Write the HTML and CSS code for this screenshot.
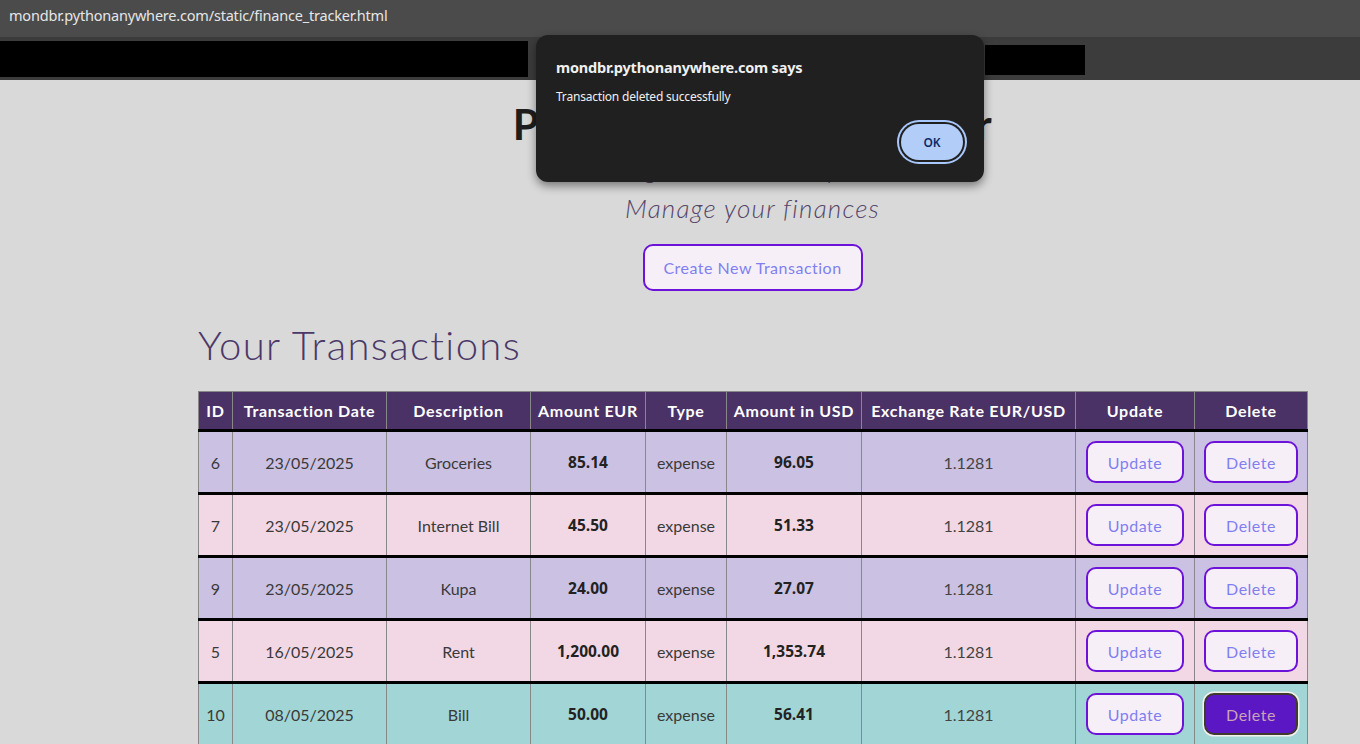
FILE: index.html
```html
<!DOCTYPE html>
<html lang="en">
<head>
<meta charset="utf-8">
<title>Finance Tracker</title>
<link rel="stylesheet" href="styles.css">
</head>
<body>
<div class="chrome">
  <div class="urlbar"><span class="url">mondbr.pythonanywhere.com/static/finance_tracker.html</span></div>
  <div class="tabstrip">
    <div class="redact redact-left"></div>
    <div class="redact redact-right"></div>
  </div>
</div>

<main class="page">
  <div class="container">
    <header class="hero">
      <h1 class="title">Personal Finance Tracker</h1>
      <p class="tagline">Bring order to all expenses</p>
      <p class="tagline">Manage your finances</p>
      <button class="btn btn-create">Create New Transaction</button>
    </header>

    <h2 class="section-title">Your Transactions</h2>

    <table class="tx-table">
      <colgroup>
        <col class="c-id"><col class="c-date"><col class="c-desc"><col class="c-eur"><col class="c-type"><col class="c-usd"><col class="c-rate"><col class="c-upd"><col class="c-del">
      </colgroup>
      <thead>
        <tr>
          <th>ID</th><th>Transaction Date</th><th>Description</th><th>Amount EUR</th><th>Type</th><th>Amount in USD</th><th>Exchange Rate EUR/USD</th><th>Update</th><th>Delete</th>
        </tr>
      </thead>
      <tbody>
        <tr class="row-lavender">
          <td>6</td><td>23/05/2025</td><td>Groceries</td><td class="num">85.14</td><td>expense</td><td class="num">96.05</td><td class="rate">1.1281</td>
          <td><button class="btn btn-row">Update</button></td><td><button class="btn btn-row">Delete</button></td>
        </tr>
        <tr class="row-pink">
          <td>7</td><td>23/05/2025</td><td>Internet Bill</td><td class="num">45.50</td><td>expense</td><td class="num">51.33</td><td class="rate">1.1281</td>
          <td><button class="btn btn-row">Update</button></td><td><button class="btn btn-row">Delete</button></td>
        </tr>
        <tr class="row-lavender">
          <td>9</td><td>23/05/2025</td><td>Kupa</td><td class="num">24.00</td><td>expense</td><td class="num">27.07</td><td class="rate">1.1281</td>
          <td><button class="btn btn-row">Update</button></td><td><button class="btn btn-row">Delete</button></td>
        </tr>
        <tr class="row-pink">
          <td>5</td><td>16/05/2025</td><td>Rent</td><td class="num">1,200.00</td><td>expense</td><td class="num">1,353.74</td><td class="rate">1.1281</td>
          <td><button class="btn btn-row">Update</button></td><td><button class="btn btn-row">Delete</button></td>
        </tr>
        <tr class="row-teal">
          <td>10</td><td>08/05/2025</td><td>Bill</td><td class="num">50.00</td><td>expense</td><td class="num">56.41</td><td class="rate">1.1281</td>
          <td><button class="btn btn-row">Update</button></td><td><button class="btn btn-row btn-active">Delete</button></td>
        </tr>
      </tbody>
    </table>
  </div>
</main>

<div class="dialog" role="alertdialog">
  <div class="dialog-title">mondbr.pythonanywhere.com says</div>
  <div class="dialog-msg">Transaction deleted successfully</div>
  <div class="dialog-actions"><button class="dialog-ok">OK</button></div>
</div>
</body>
</html>
```

FILE: styles.css
```css
html, body {
  margin: 0;
  padding: 0;
  overflow: hidden;
  height: 744px;
}
body {
  background: #d9d9d9;
  font-family: "Lato", "Open Sans", sans-serif;
  color: #3a3a3a;
}

/* browser chrome */
.chrome {
  display: flex;
  flex-direction: column;
}
.urlbar {
  height: 37px;
  background: #4b4b4b;
  display: flex;
  align-items: center;
  padding-left: 9px;
  padding-bottom: 8px;
  box-sizing: border-box;
}
.url {
  font-family: "Noto Sans", "Open Sans", sans-serif;
  font-size: 14.5px;
  color: #e6e6e6;
  letter-spacing: -0.2px;
}
.tabstrip {
  height: 43px;
  background: #3c3c3c;
  display: flex;
  align-items: flex-start;
}
.redact {
  background: #000;
}
.redact-left {
  width: 528px;
  height: 36px;
  margin-top: 4px;
}
.redact-right {
  width: 100px;
  height: 30px;
  margin-top: 8px;
  margin-left: 457px;
}

/* page */
.page {
  padding-top: 20px;
}
.container {
  margin-left: 198px;
  width: 1109px;
}
.hero {
  display: flex;
  flex-direction: column;
  align-items: center;
}
.title {
  margin: 0;
  font-size: 42px;
  line-height: 48px;
  font-weight: 700;
  letter-spacing: 0.7px;
  color: #1e1e1e;
}
.tagline {
  margin: 0;
  font-size: 26px;
  line-height: 40px;
  font-style: italic;
  font-weight: 300;
  letter-spacing: 1.2px;
  color: #55466a;
}
.btn {
  font-family: "Lato", "Open Sans", sans-serif;
  font-size: 16px;
  font-weight: 400;
  letter-spacing: 0.5px;
  background: #f7eff8;
  border: 2px solid #6d12d9;
  border-radius: 10px;
  color: #7f7ff0;
  cursor: pointer;
}
.btn-create {
  margin-top: 16px;
  width: 220px;
  height: 47px;
}
.section-title {
  margin: 30px 0 22px;
  font-size: 40px;
  line-height: 48px;
  font-weight: 300;
  letter-spacing: 1.4px;
  color: #4a3868;
}

/* table */
.tx-table {
  width: 1109px;
  table-layout: fixed;
  border-collapse: collapse;
  border: 1px solid #666;
}
.c-id { width: 34px; }
.c-date { width: 154px; }
.c-desc { width: 144px; }
.c-eur { width: 115px; }
.c-type { width: 81px; }
.c-usd { width: 135px; }
.c-rate { width: 214px; }
.c-upd { width: 119px; }
.c-del { width: 113px; }

.tx-table th {
  background: #4a3166;
  color: #fff;
  font-weight: 700;
  font-size: 16px;
  letter-spacing: 0.7px;
  height: 37px;
  padding: 0;
  border: 1px solid #888;
  border-bottom: 3px solid #000;
  text-align: center;
  white-space: nowrap;
}
.tx-table td {
  height: 60px;
  padding: 0;
  text-align: center;
  font-size: 16px;
  color: #3a3a3a;
  border-left: 1px solid #888;
  border-right: 1px solid #888;
  border-bottom: 3px solid #000;
}
.tx-table td.num {
  font-family: "Open Sans", "Noto Sans", sans-serif;
  font-weight: 700;
  font-size: 15.5px;
  color: #222;
}
.tx-table td.rate {
  font-weight: 400;
  color: #444;
}
.row-lavender td { background: #cbc1e2; }
.row-pink td { background: #f2d8e5; }
.row-teal td { background: #a1d5d6; }

.btn-row {
  height: 42px;
  padding: 0 20px;
}
.btn-active {
  background: #5a17c3;
  border-color: #3e3a2e;
  color: #caa4b4;
  box-shadow: 0 0 0 1.5px #f4f0ee;
}

/* alert dialog */
.dialog {
  position: absolute;
  left: 536px;
  top: 35px;
  width: 448px;
  height: 147px;
  box-sizing: border-box;
  background: #202020;
  border-radius: 12px;
  box-shadow: 0 4px 10px rgba(0, 0, 0, 0.45);
  padding: 22px 20px 0 20px;
  font-family: "Noto Sans", "Open Sans", sans-serif;
  color: #f0f0f0;
}
.dialog-title {
  font-size: 14.5px;
  font-weight: 700;
  line-height: 20px;
  letter-spacing: -0.2px;
}
.dialog-msg {
  margin-top: 12px;
  font-size: 12px;
  line-height: 16px;
  letter-spacing: -0.2px;
}
.dialog-actions {
  display: flex;
  justify-content: flex-end;
  margin-top: 19px;
  padding-right: 1px;
}
.dialog-ok {
  width: 62px;
  height: 36px;
  border: none;
  border-radius: 18px;
  background: #b2cdf8;
  color: #0e2a66;
  font-family: "Noto Sans", "Open Sans", sans-serif;
  font-size: 12px;
  font-weight: 600;
  box-shadow: 0 0 0 2px #202020, 0 0 0 4px #a8c7fa;
}
```
